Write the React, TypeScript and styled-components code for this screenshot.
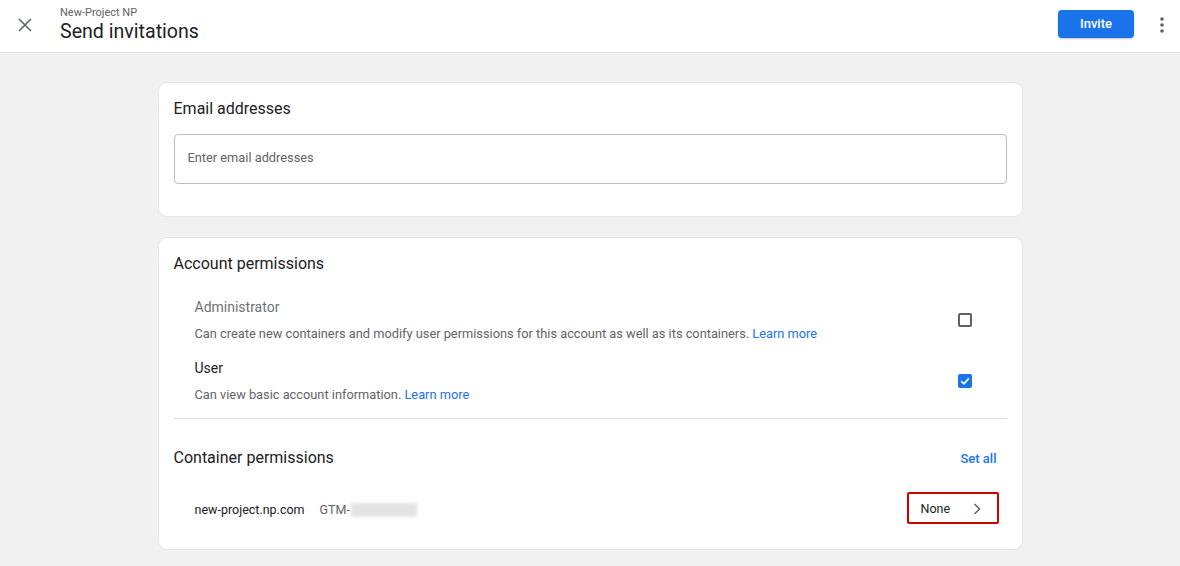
import React from 'react';
import styled, { createGlobalStyle } from 'styled-components';

const GlobalStyle = createGlobalStyle`
  body {
    margin: 0;
    font-family: Roboto, "Noto Sans", Arial, sans-serif;
    background: #f1f1f1;
    color: #202124;
  }
`;

const Page = styled.div`
  min-height: 566px;
  background: #f1f1f1;
`;

// Top bar
const Header = styled.header`
  height: 53px;
  background: #fff;
  border-bottom: 1px solid #e0e0e0;
  display: flex;
  align-items: center;
  box-sizing: border-box;
  padding: 0 7px 0 14px;
`;

const IconButton = styled.button`
  width: 22px;
  height: 22px;
  border: none;
  background: none;
  padding: 0;
  display: flex;
  align-items: center;
  justify-content: center;
  color: #5f6368;
  cursor: pointer;
  margin-top: -3px;
`;

const TitleBlock = styled.div`
  margin-left: 24px;
  display: flex;
  flex-direction: column;
  flex: 1;
  margin-top: -3px;
`;

const Crumb = styled.span`
  font-size: 11px;
  color: #5f6368;
  line-height: 14px;
`;

const Title = styled.h1`
  margin: 0;
  font-size: 19.6px;
  font-weight: 400;
  line-height: 24px;
  color: #202124;
`;

const PrimaryButton = styled.button`
  height: 28px;
  width: 76px;
  border: none;
  border-radius: 4px;
  background: #1a73e8;
  color: #fff;
  font-family: inherit;
  font-size: 13px;
  font-weight: 500;
  box-shadow: 0 1px 2px rgba(0, 0, 0, 0.25);
  margin-right: 17px;
  margin-top: -5px;
`;

// Content
const Main = styled.main`
  width: 863px;
  margin: 0 auto;
  padding-top: 30px;
  display: flex;
  flex-direction: column;
  gap: 22px;
`;

const Card = styled.section<{ $pb?: number }>`
  background: #fff;
  border-radius: 8px;
  box-shadow: 0 0 0 1px #e6e6e6;
  padding: 15px 15px ${(p) => p.$pb ?? 0}px 15px;
`;

const CardTitle = styled.h2`
  margin: 0;
  font-size: 16px;
  font-weight: 400;
  line-height: 22px;
  color: #202124;
`;

const EmailInput = styled.input`
  display: block;
  width: 100%;
  box-sizing: border-box;
  height: 50px;
  margin-top: 14px;
  border: 1px solid #bdbdbd;
  border-radius: 4px;
  padding: 0 13px 3px;
  font-family: inherit;
  font-size: 12.8px;
  color: #202124;
  outline: none;
  &::placeholder {
    color: #5f6368;
  }
`;

const PermList = styled.div`
  padding: 23px 0 0 21px;
  display: flex;
  flex-direction: column;
  gap: 17px;
`;

const PermRow = styled.div`
  display: flex;
  align-items: center;
`;

const PermText = styled.div`
  flex: 1;
`;

const PermName = styled.div<{ $muted?: boolean }>`
  font-size: 14px;
  line-height: 18px;
  color: ${(p) => (p.$muted ? '#6f7276' : '#202124')};
`;

const PermDesc = styled.div`
  font-size: 12.8px;
  line-height: 16px;
  margin-top: 10px;
  color: #5f6368;
`;

const Link = styled.a`
  color: #1a73e8;
  text-decoration: none;
`;

const CheckBox = styled.span<{ $checked?: boolean }>`
  width: 14px;
  height: 14px;
  box-sizing: border-box;
  border-radius: 2px;
  border: 2px solid ${(p) => (p.$checked ? '#1a73e8' : '#5f6368')};
  background: ${(p) => (p.$checked ? '#1a73e8' : '#fff')};
  display: flex;
  align-items: center;
  justify-content: center;
  margin-right: 35px;
  margin-top: -1px;
`;

const Divider = styled.hr`
  border: none;
  border-top: 1px solid #e0e0e0;
  margin: 15px 0 0 0;
`;

const SectionHead = styled.div`
  display: flex;
  align-items: center;
  justify-content: space-between;
  margin-top: 28px;
`;

const TextButton = styled.a`
  font-size: 13px;
  font-weight: 500;
  color: #1a73e8;
  margin-right: 10px;
`;

const ContainerRow = styled.div`
  display: flex;
  align-items: center;
  padding: 24px 8px 0 21px;
  height: 31px;
`;

const ContainerName = styled.span`
  font-size: 12.5px;
  color: #202124;
  margin-top: 2px;
`;

const ContainerId = styled.span`
  font-size: 12.5px;
  color: #5f6368;
  margin-left: 15px;
  margin-top: 2px;
  display: flex;
  align-items: center;
  flex: 1;
`;

const Blurred = styled.span`
  display: inline-block;
  width: 66px;
  height: 14px;
  margin-left: 1px;
  background: #e4e4e4;
  filter: blur(1.5px);
`;

const SelectButton = styled.button`
  width: 92px;
  height: 32px;
  box-sizing: border-box;
  border: 2px solid #d00000;
  border-radius: 2px;
  background: #fff;
  display: flex;
  align-items: center;
  justify-content: space-between;
  padding: 2px 16px 0 12px;
  margin-top: -2px;
  font-family: inherit;
  font-size: 12.5px;
  color: #202124;
`;

const CheckIcon = () => (
  <svg width="10" height="10" viewBox="0 0 10 10">
    <path d="M1.2 5.2 L3.9 7.8 L8.8 2.4" fill="none" stroke="#fff" strokeWidth="1.6" />
  </svg>
);

const App = () => {
  return (
    <Page>
      <GlobalStyle />
      <Header>
        <IconButton aria-label="Close">
          <svg width="14" height="14" viewBox="0 0 14 14">
            <path d="M1 1 L13 13 M13 1 L1 13" stroke="#5f6368" strokeWidth="1.6" />
          </svg>
        </IconButton>
        <TitleBlock>
          <Crumb>New-Project NP</Crumb>
          <Title>Send invitations</Title>
        </TitleBlock>
        <PrimaryButton>Invite</PrimaryButton>
        <IconButton aria-label="More">
          <svg width="4" height="16" viewBox="0 0 4 16">
            <circle cx="2" cy="2" r="1.8" fill="#5f6368" />
            <circle cx="2" cy="8" r="1.8" fill="#5f6368" />
            <circle cx="2" cy="14" r="1.8" fill="#5f6368" />
          </svg>
        </IconButton>
      </Header>

      <Main>
        <Card $pb={32}>
          <CardTitle>Email addresses</CardTitle>
          <EmailInput placeholder="Enter email addresses" />
        </Card>

        <Card $pb={25}>
          <CardTitle>Account permissions</CardTitle>
          <PermList>
            <PermRow>
              <PermText>
                <PermName $muted>Administrator</PermName>
                <PermDesc>
                  Can create new containers and modify user permissions for this account as well as its containers.{' '}
                  <Link>Learn more</Link>
                </PermDesc>
              </PermText>
              <CheckBox />
            </PermRow>
            <PermRow>
              <PermText>
                <PermName>User</PermName>
                <PermDesc>
                  Can view basic account information. <Link>Learn more</Link>
                </PermDesc>
              </PermText>
              <CheckBox $checked>
                <CheckIcon />
              </CheckBox>
            </PermRow>
          </PermList>
          <Divider />
          <SectionHead>
            <CardTitle>Container permissions</CardTitle>
            <TextButton>Set all</TextButton>
          </SectionHead>
          <ContainerRow>
            <ContainerName>new-project.np.com</ContainerName>
            <ContainerId>
              GTM-<Blurred />
            </ContainerId>
            <SelectButton>
              None
              <svg width="8" height="12" viewBox="0 0 8 12">
                <path d="M1.5 1 L6.5 6 L1.5 11" fill="none" stroke="#5f6368" strokeWidth="1.5" />
              </svg>
            </SelectButton>
          </ContainerRow>
        </Card>
      </Main>
    </Page>
  );
};

export default App;
